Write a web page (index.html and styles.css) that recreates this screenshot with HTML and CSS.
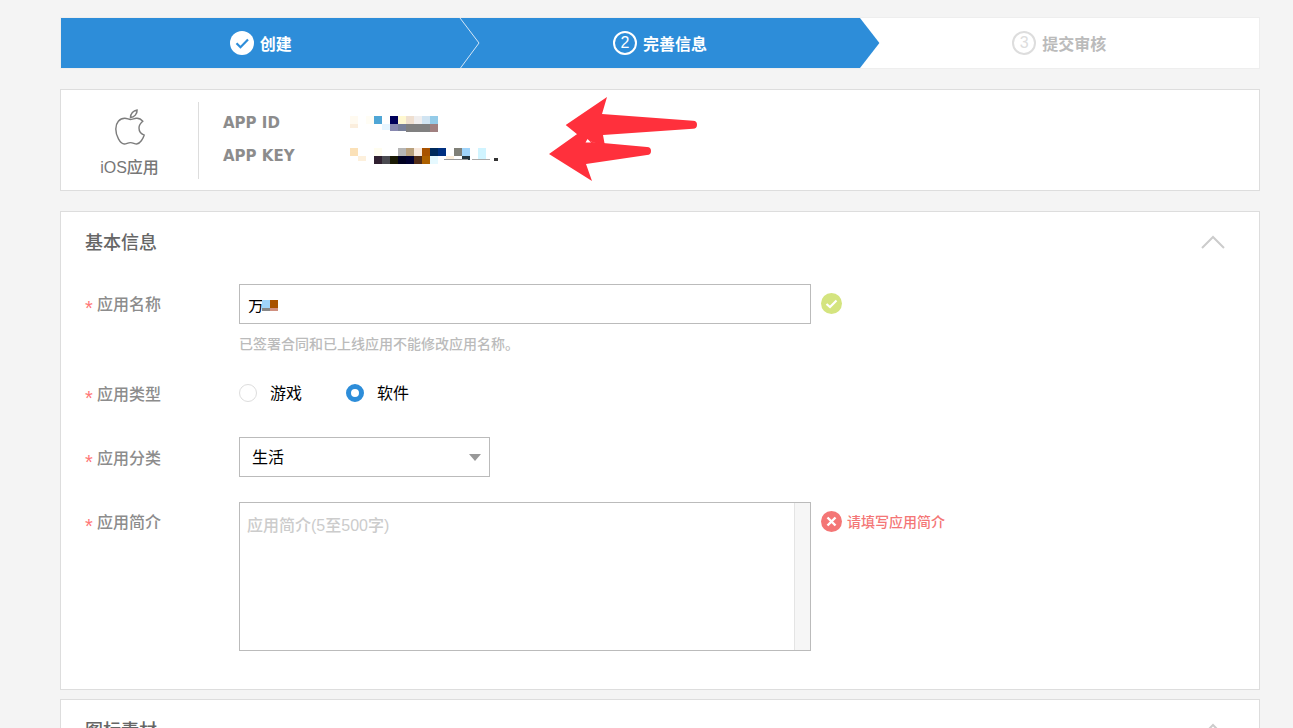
FILE: index.html
```html
<!DOCTYPE html>
<html lang="zh-CN">
<head>
<meta charset="utf-8">
<title>完善信息</title>
<link rel="stylesheet" href="styles.css">
</head>
<body>
<main class="page">
  <div class="steps">
    <div class="step active">
      <span class="step-icon check">
        <svg width="24" height="24" viewBox="0 0 24 24"><circle cx="12" cy="12" r="12" fill="#fff"/><path d="M6.500 12.200l4 4 7.500-7.600" fill="none" stroke="#2d8dd9" stroke-width="2.200"/></svg>
      </span>
      <span>创建</span>
      <svg class="step-sep" width="22" height="50" viewBox="0 0 22 50"><path d="M1 0L20 25 1.500 50" fill="none" stroke="#d5e6f5" stroke-width="1"/></svg>
    </div>
    <div class="step active">
      <span class="step-icon">2</span>
      <span>完善信息</span>
      <svg class="step-tip" width="20" height="50" viewBox="0 0 20 50"><path d="M0 0L19.400 25 0 50Z" fill="#2d8dd9"/></svg>
    </div>
    <div class="step todo">
      <span class="step-icon">3</span>
      <span>提交审核</span>
    </div>
  </div>

  <section class="app-card">
    <div class="app-type">
      <svg class="apple" width="32" height="38" viewBox="0 0 32 38"><path d="M16.500 11C14.500 11 13 9.800 10.500 9.800 5 9.800 1 14.500 1 21c0 7 4.500 16 9 16 2.500 0 3.500-1.500 6.500-1.500S20.500 37 23 37c3.500 0 7-6 8-9.500-4-1.500-5.500-4.500-5.500-7.500s1.500-5 4-7c-2-2.500-4.500-3.500-7-3.200-2 .2-4.500 1.200-6.500 1.200Z" fill="none" stroke="#7c7c7c" stroke-width="1.500"/><path d="M16.500 9C16.500 5 19.500 1.500 23.500 1c.3 4-3 8-7 8Z" fill="none" stroke="#7c7c7c" stroke-width="1.500"/></svg>
      <div class="app-type-name">iOS应用</div>
    </div>
    <dl class="app-keys">
      <div class="key-row"><dt>APP ID</dt><dd></dd></div>
      <div class="key-row"><dt>APP KEY</dt><dd></dd></div>
    </dl>
    <svg class="mosaic" width="160" height="52" viewBox="350 116 160 52">
      <rect x="350" y="116" width="8" height="8" fill="#fffaf0"/><rect x="366" y="116" width="8" height="8" fill="#fffdf5"/><rect x="374" y="116" width="8" height="8" fill="#4fa6d6"/><rect x="390" y="116" width="8" height="8" fill="#00005a"/><rect x="398" y="116" width="8" height="8" fill="#fff8d0"/><rect x="406" y="116" width="8" height="8" fill="#efdfd0"/><rect x="414" y="116" width="8" height="8" fill="#f0eeee"/><rect x="422" y="116" width="8" height="8" fill="#d0e4f2"/><rect x="430" y="116" width="8" height="8" fill="#94cbe8"/>
      <rect x="350" y="124" width="8" height="4" fill="#fbeedd"/><rect x="382" y="124" width="8" height="6" fill="#e6f5ff"/><rect x="390" y="124" width="8" height="7" fill="#8888b0"/><rect x="398" y="124" width="8" height="7" fill="#78809a"/><rect x="406" y="124" width="24" height="8" fill="#808080"/><rect x="430" y="124" width="8" height="8" fill="#a08080"/>
      <rect x="350" y="148" width="8" height="8" fill="#fbe1b8"/><rect x="374" y="148" width="8" height="8" fill="#fffdf0"/><rect x="398" y="148" width="8" height="8" fill="#b5b5b5"/><rect x="406" y="148" width="8" height="8" fill="#b9a07c"/><rect x="414" y="148" width="8" height="8" fill="#f9e9dd"/><rect x="422" y="148" width="8" height="8" fill="#a85200"/><rect x="430" y="148" width="8" height="8" fill="#002a5c"/><rect x="438" y="148" width="8" height="8" fill="#003080"/><rect x="454" y="148" width="8" height="8" fill="#808078"/><rect x="462" y="148" width="8" height="8" fill="#a0d4fa"/><rect x="478" y="148" width="8" height="8" fill="#d0f4ff"/>
      <rect x="358" y="156" width="8" height="5" fill="#fdf0dc"/><rect x="374" y="156" width="8" height="8" fill="#302030"/><rect x="382" y="156" width="8" height="8" fill="#4a4a50"/><rect x="390" y="156" width="8" height="8" fill="#1a1a05"/><rect x="398" y="156" width="8" height="8" fill="#000020"/><rect x="406" y="156" width="8" height="8" fill="#000030"/><rect x="414" y="156" width="8" height="8" fill="#532e18"/><rect x="422" y="156" width="8" height="8" fill="#ad6000"/><rect x="430" y="156" width="8" height="8" fill="#e6f9ff"/><rect x="446" y="156" width="8" height="4" fill="#fdf0dd"/><rect x="462" y="156" width="8" height="4" fill="#243640"/><rect x="478" y="156" width="8" height="4" fill="#d0f4ff"/>
      <rect x="444" y="159" width="24" height="1" fill="#999"/><rect x="472" y="159" width="18" height="1" fill="#aaa"/><rect x="494" y="158" width="4" height="3" fill="#333"/>
    </svg>
    <svg class="arrows" width="160" height="90" viewBox="545 95 160 90"><path d="M607 97L602 114 693 120.700a4 4 0 0 1 0 8L603 135 605 146 583 139 565.700 125Z" fill="#ff303c"/><path d="M549 154L580 132 592 142 647 147a4 4 0 0 1 0 8L586 164 592 181Z" fill="#ff303c"/><path d="M585.500 142.500L591 142.500 587.500 139Z" fill="#fff"/></svg>
  </section>

  <section class="panel">
    <header class="panel-head">
      <h2>基本信息</h2>
      <svg width="24" height="14" viewBox="0 0 24 14"><path d="M1 13L12 2 23 13" fill="none" stroke="#ccc" stroke-width="2"/></svg>
    </header>
    <div class="form">
      <div class="row row-name">
        <label class="row-label label-up"><i>*</i>应用名称</label>
        <div class="field">
          <div class="name-box">
            <input class="input" type="text" value="方">
            <svg class="name-mosaic" width="30" height="16" viewBox="0 0 30 16"><rect width="14" height="4" fill="#fff"/><rect x="14" y="4" width="8" height="8" fill="#a0d4fa"/><rect x="22" y="4" width="8" height="8" fill="#a85200"/><rect x="14" y="12" width="8" height="3" fill="#888"/><rect x="22" y="12" width="8" height="3" fill="#d09080"/></svg>
          </div>
          <p class="hint">已签署合同和已上线应用不能修改应用名称。</p>
        </div>
        <svg class="status" width="21" height="21" viewBox="0 0 21 21"><circle cx="10.500" cy="10.500" r="10.500" fill="#d4e47f"/><path d="M5.500 11l3.500 3 6.500-6.500" fill="none" stroke="#fff" stroke-width="2.200"/></svg>
      </div>
      <div class="row row-type">
        <label class="row-label"><i>*</i>应用类型</label>
        <div class="radios">
          <span class="radio-item"><span class="radio"></span>游戏</span>
          <span class="radio-item"><span class="radio checked"></span>软件</span>
        </div>
      </div>
      <div class="row row-cat">
        <label class="row-label"><i>*</i>应用分类</label>
        <div class="select">生活<span class="caret"></span></div>
      </div>
      <div class="row">
        <label class="row-label label-up"><i>*</i>应用简介</label>
        <div class="textarea-box">
          <textarea class="textarea" placeholder="应用简介(5至500字)"></textarea>
          <span class="track"></span>
        </div>
        <svg class="status" width="21" height="21" viewBox="0 0 21 21"><circle cx="10.500" cy="10.500" r="10.500" fill="#f47676"/><path d="M6.500 6.500l8 8M14.500 6.500l-8 8" fill="none" stroke="#fff" stroke-width="2.400"/></svg>
        <span class="error">请填写应用简介</span>
      </div>
    </div>
  </section>

  <section class="panel panel-next">
    <header class="panel-head">
      <h2>图标素材</h2>
      <svg width="24" height="14" viewBox="0 0 24 14"><path d="M1 13L12 2 23 13" fill="none" stroke="#ccc" stroke-width="2"/></svg>
    </header>
  </section>
</main>
</body>
</html>
```
FILE: styles.css
```css
html, body {
  margin: 0;
  height: 100%;
  overflow: hidden;
  background: #f4f4f4;
}
body {
  font-family: "Liberation Sans", "Noto Sans CJK SC", sans-serif;
  font-size: 16px;
  font-weight: 500;
  color: #000;
}
.page {
  width: 1200px;
  margin-left: 60px;
  padding-top: 17px;
}

/* steps */
.steps {
  display: flex;
  height: 50px;
  background: #fff;
  border: 1px solid #eee;
}
.step {
  flex: 1;
  position: relative;
  display: flex;
  align-items: center;
  justify-content: center;
  gap: 6px;
  box-sizing: border-box;
  padding-top: 4px;
  font-weight: 700;
  line-height: 46px;
}
.step.active {
  background: #2d8dd9;
  color: #fff;
}
.step.todo {
  color: #bbb;
}
.step-icon {
  width: 24px;
  height: 24px;
  box-sizing: border-box;
  border: 2px solid #fff;
  border-radius: 50%;
  display: flex;
  align-items: center;
  justify-content: center;
  font-weight: 400;
  font-size: 16px;
  line-height: 20px;
  margin-top: -4px;
}
.step-icon.check {
  border: 0;
}
.todo .step-icon {
  border-color: #ddd;
  color: #ddd;
}
.step-sep {
  position: absolute;
  top: 0;
  right: -21px;
  z-index: 1;
}
.step-tip {
  position: absolute;
  top: 0;
  right: -20px;
  z-index: 1;
}

/* app card */
.app-card {
  position: relative;
  display: flex;
  height: 77px;
  margin-top: 20px;
  padding: 12px 0 11px;
  background: #fff;
  border: 1px solid #ddd;
}
.app-type {
  width: 137px;
  border-right: 1px solid #ddd;
  display: flex;
  flex-direction: column;
  align-items: center;
}
.apple {
  margin-top: 7px;
}
.app-type-name {
  margin-top: 12px;
  line-height: 22px;
  color: #777;
}
.app-keys {
  margin: 0;
  padding: 5px 0 0 24px;
}
.key-row {
  display: flex;
  line-height: 33px;
}
.key-row dt {
  font-family: "DejaVu Sans", sans-serif;
  font-size: 15px;
  font-weight: 700;
  color: #8c8c8c;
}
.key-row dd {
  margin: 0;
}
.mosaic {
  position: absolute;
  left: 289px;
  top: 26px;
}
.arrows {
  position: absolute;
  left: 484px;
  top: 5px;
}

/* panels */
.panel {
  margin-top: 20px;
  height: 477px;
  background: #fff;
  border: 1px solid #ddd;
}
.panel-next {
  margin-top: 9px;
  height: 300px;
}
.panel-head {
  display: flex;
  align-items: center;
  justify-content: space-between;
  height: 60px;
  padding: 0 34px 0 24px;
}
.panel-head h2 {
  margin: 0 0 2px;
  font-size: 18px;
  font-weight: 500;
  color: #666;
}
.form {
  padding: 12px 24px 0;
}
.row {
  display: flex;
  align-items: flex-start;
  margin-bottom: 24px;
}
.row-name {
  margin-bottom: 18px;
}
.row-cat {
  margin-bottom: 25px;
}
.row-label {
  width: 154px;
  height: 40px;
  flex: none;
  line-height: 44px;
  color: #8c8c8c;
}
.label-up {
  line-height: 42px;
}
.row-label i {
  display: inline-block;
  width: 12px;
  font-size: 20px;
  line-height: 0;
  vertical-align: -5px;
  font-style: normal;
  color: #f77;
}
.name-box {
  position: relative;
}
.input {
  display: block;
  box-sizing: border-box;
  width: 572px;
  height: 40px;
  padding: 0 8px;
  border: 1px solid #bbb;
  border-radius: 0;
  outline: 0;
  font: inherit;
  font-weight: 400;
  color: #000;
}
.name-mosaic {
  position: absolute;
  left: 9px;
  top: 12px;
}
.hint {
  margin: 9px 0 0;
  font-size: 14px;
  line-height: 22px;
  color: #bbb;
}
.status {
  flex: none;
  margin: 9px 0 0 10px;
}
.error {
  margin: 9px 0 0 5px;
  font-size: 14px;
  line-height: 23px;
  color: #f47676;
}
.radios {
  display: flex;
  gap: 44px;
  height: 40px;
  align-items: center;
  font-weight: 400;
}
.radio-item {
  display: flex;
  align-items: center;
  gap: 13px;
  padding-bottom: 2px;
}
.radio {
  width: 18px;
  height: 18px;
  box-sizing: border-box;
  margin-top: 2px;
  border: 1px solid #ddd;
  border-radius: 50%;
}
.radio.checked {
  border: 5px solid #2d8dd9;
}
.select {
  position: relative;
  box-sizing: border-box;
  width: 251px;
  height: 40px;
  padding-left: 12px;
  border: 1px solid #bbb;
  font-weight: 400;
  line-height: 40px;
}
.caret {
  position: absolute;
  right: 8px;
  top: 16px;
  border-style: solid;
  border-width: 7px 6px 0;
  border-color: #999 transparent transparent;
}
.textarea-box {
  display: flex;
  box-sizing: border-box;
  width: 572px;
  height: 149px;
  border: 1px solid #bbb;
}
.textarea {
  flex: 1;
  min-width: 0;
  padding: 12px 7px;
  border: 0;
  outline: 0;
  resize: none;
  font: inherit;
  line-height: 22px;
}
.textarea::placeholder {
  color: #ccc;
  opacity: 1;
}
.track {
  flex: none;
  width: 15px;
  background: #f6f6f6;
  border-left: 1px solid #e4e4e4;
}
```
